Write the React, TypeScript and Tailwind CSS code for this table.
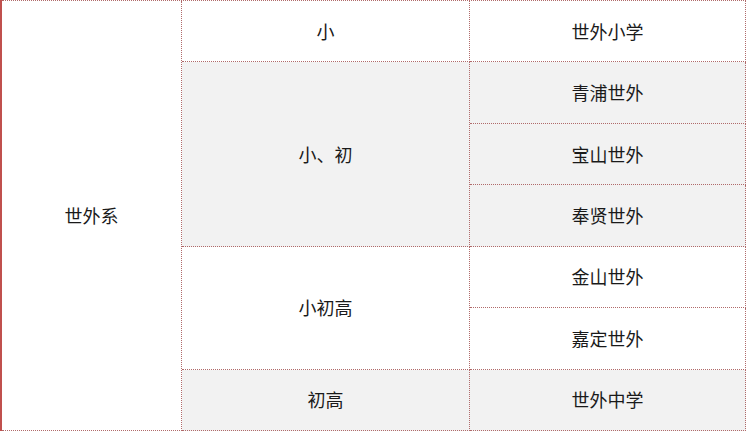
import React from 'react'

// School system table: 世外系 branches by stage

type Cell = { text: string; gray?: boolean; col: string }

const cells: Cell[] = [
  { text: '小', col: 'col-start-2 row-start-1' },
  { text: '世外小学', col: 'col-start-3 row-start-1' },
  { text: '小、初', gray: true, col: 'col-start-2 row-start-2 row-span-3' },
  { text: '青浦世外', gray: true, col: 'col-start-3 row-start-2' },
  { text: '宝山世外', gray: true, col: 'col-start-3 row-start-3' },
  { text: '奉贤世外', gray: true, col: 'col-start-3 row-start-4' },
  { text: '小初高', col: 'col-start-2 row-start-5 row-span-2' },
  { text: '金山世外', col: 'col-start-3 row-start-5' },
  { text: '嘉定世外', col: 'col-start-3 row-start-6' },
  { text: '初高', gray: true, col: 'col-start-2 row-start-7' },
  { text: '世外中学', gray: true, col: 'col-start-3 row-start-7' },
]

export default function App() {
  return (
    <div className="w-[747px] h-[431px] bg-white overflow-hidden">
      <div className="w-[746px] h-[431px] border-l-2 border-[#c0504d]">
        <div
          className="grid grid-cols-[180px_288px_276px] grid-rows-[repeat(7,1fr)] h-full border-t border-dotted border-[#b06a6a] text-[#1a1a1a] text-[18px]"
          style={{ fontFamily: '"Noto Sans CJK SC", sans-serif' }}
        >
          <div className="col-start-1 row-start-1 row-span-7 flex items-center justify-center bg-white border-r border-b border-dotted border-[#b06a6a]">
            世外系
          </div>
          {cells.map((c, i) => (
            <div
              key={i}
              className={`${c.col} flex items-center justify-center border-r border-b border-dotted border-[#b06a6a] ${
                c.gray ? 'bg-[#f2f2f2]' : 'bg-white'
              }`}
            >
              {c.text}
            </div>
          ))}
        </div>
      </div>
    </div>
  )
}
